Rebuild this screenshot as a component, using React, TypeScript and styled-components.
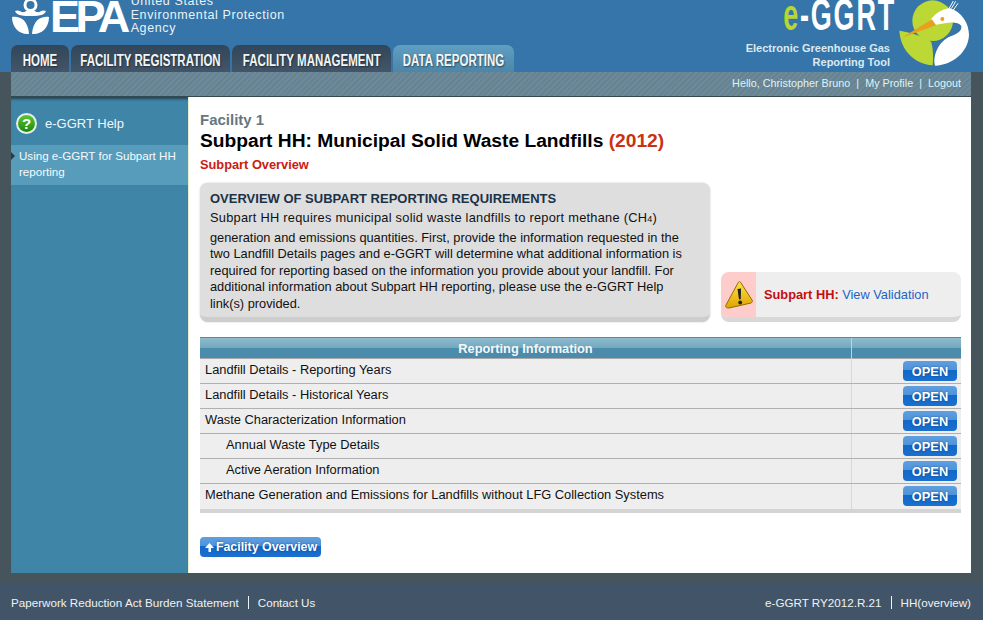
import React from "react";
import styled, { createGlobalStyle } from "styled-components";

const GlobalStyle = createGlobalStyle`
  html, body {
    margin: 0;
    padding: 0;
    background: #46555c;
  }
  * {
    box-sizing: border-box;
  }
`;

const Page = styled.div`
  width: 983px;
  height: 620px;
  overflow: hidden;
  display: flex;
  flex-direction: column;
  background: #46555c;
  font-family: "Liberation Sans", Arial, sans-serif;
  font-size: 13px;
`;

const Header = styled.header`
  height: 72px;
  flex: none;
  display: flex;
  justify-content: space-between;
  background: #3575a9;
  overflow: hidden;
`;

const HeaderLeft = styled.div`
  display: flex;
  flex-direction: column;
`;

const Brand = styled.div`
  height: 45px;
  padding-left: 12px;
  display: flex;
  align-items: flex-start;
  overflow: hidden;
`;

const EpaMark = styled.span`
  margin: -7px 0 0 1px;
  font-size: 45px;
  line-height: 48px;
  font-weight: 700;
  letter-spacing: -4.5px;
  color: #fff;
`;

const AgencyName = styled.div`
  margin: -5px 0 0 5px;
  font-size: 12.5px;
  line-height: 13.5px;
  letter-spacing: 0.6px;
  color: #eaf2f8;
`;

const Tabs = styled.nav`
  height: 27px;
  padding-left: 11px;
  display: flex;
  gap: 2px;
`;

const Tab = styled.a<{ $active?: boolean; $width: number }>`
  width: ${(p) => p.$width}px;
  padding-top: 4px;
  display: flex;
  align-items: center;
  justify-content: center;
  border-radius: 7px 7px 0 0;
  background: ${(p) =>
    p.$active
      ? "linear-gradient(#5f9fc3, #4c86a8)"
      : "linear-gradient(#31465a, #435669)"};
  color: #f2f5f7;
  font-size: 16px;
  font-weight: 700;
  text-shadow: 1px 1px 2px rgba(0, 0, 0, 0.5);
`;

const TabLabel = styled.span`
  flex: none;
  white-space: nowrap;
  transform: scaleX(0.72);
`;

const GgrtBrand = styled.div`
  display: flex;
`;

const GgrtText = styled.div`
  display: flex;
  flex-direction: column;
  align-items: flex-end;
`;

const GgrtWord = styled.div`
  height: 42px;
  margin-top: -6px;
  font-size: 45px;
  line-height: 42px;
  font-weight: 700;
  letter-spacing: 3px;
  white-space: nowrap;
  color: #fff;
  transform-origin: right center;
  transform: translateX(6px) scaleX(0.6);
  span {
    color: #b8d632;
  }
`;

const GgrtTag = styled.div`
  margin-top: 5px;
  text-align: right;
  font-size: 11px;
  line-height: 14px;
  font-weight: 700;
  color: #dce9f2;
`;

const BirdWrap = styled.div`
  width: 93px;
  flex: none;
`;

const UtilityBar = styled.div`
  height: 25px;
  margin: 0 12px 0 11px;
  flex: none;
  display: flex;
  align-items: center;
  justify-content: flex-end;
  padding: 0 10px 2px 0;
  gap: 6px;
  border-bottom: 1px solid #37474f;
  background: repeating-linear-gradient(135deg, #6c8a9b 0 2px, #66838f 2px 4px);
  color: #dff3f7;
  font-size: 10.8px;
`;

const Body = styled.div`
  height: 476px;
  margin: 0 12px 0 11px;
  flex: none;
  display: flex;
`;

const Sidebar = styled.aside`
  width: 178px;
  flex: none;
  background: #3f85a8;
  border-right: 1px solid #e9f2d0;
  box-shadow: inset 0 4px 3px -2px rgba(30, 50, 60, 0.8);
`;

const HelpTitle = styled.div`
  height: 48px;
  padding: 5px 0 0 5px;
  display: flex;
  align-items: center;
  gap: 8px;
  color: #f2f7fa;
  font-size: 13px;
`;

const HelpLink = styled.a`
  position: relative;
  display: block;
  padding: 3px 4px 5px 8px;
  background: #589cbc;
  border-bottom: 1px solid #4a7f9c;
  color: #f6fafc;
  font-size: 11.6px;
  line-height: 16px;
  &::before {
    content: "";
    position: absolute;
    left: 0;
    top: 7px;
    border-left: 4px solid #2c3a44;
    border-top: 4px solid transparent;
    border-bottom: 4px solid transparent;
  }
`;

const Main = styled.main`
  flex: 1;
  background: #fff;
  padding: 14px 10px 0 11px;
`;

const FacilityName = styled.div`
  font-size: 15px;
  line-height: 18px;
  font-weight: 700;
  color: #66767f;
`;

const Title = styled.h1`
  margin: 0;
  font-size: 19.2px;
  line-height: 24px;
  font-weight: 700;
  color: #000;
  span {
    color: #c8330f;
  }
`;

const SubTitle = styled.div`
  margin-top: 4px;
  font-size: 12.8px;
  line-height: 16px;
  font-weight: 700;
  color: #c8200f;
`;

const InfoRow = styled.div`
  margin-top: 10px;
  display: flex;
  align-items: flex-end;
  gap: 11px;
`;

const OverviewBox = styled.section`
  width: 510px;
  height: 139px;
  padding: 7px 10px 0;
  border-radius: 8px;
  border-bottom: 5px solid #cdcdcd;
  background: #dedede;
  box-shadow: 0 0 2px #c8c8c8;
  color: #111;
  font-size: 12.8px;
  line-height: 16.5px;
  sub {
    font-size: 9px;
    vertical-align: baseline;
  }
`;

const OverviewHeading = styled.h2`
  margin: 0 0 3px;
  font-size: 13px;
  line-height: 17px;
  font-weight: 700;
  color: #1c3246;
`;

const LeadLine = styled.div`
  margin-bottom: 2px;
  letter-spacing: 0.26px;
`;

const ValidationBox = styled.div`
  width: 240px;
  height: 50px;
  display: flex;
  align-items: center;
  overflow: hidden;
  border-radius: 8px;
  border-bottom: 5px solid #d8d8d8;
  background: #eee;
`;

const ValidationIcon = styled.div`
  width: 35px;
  height: 50px;
  margin-bottom: -5px;
  flex: none;
  display: flex;
  align-items: center;
  justify-content: center;
  padding-bottom: 5px;
  background: linear-gradient(#ffcccc 90%, #f4b4b4 90%);
`;

const ValidationText = styled.div`
  padding-left: 8px;
  font-size: 12.8px;
  font-weight: 700;
  color: #c40d0d;
  a {
    font-weight: 400;
    color: #1c64c4;
  }
`;

const Table = styled.div`
  margin-top: 15px;
  border-bottom: 4px solid #d4d4d4;
`;

const HeadRow = styled.div`
  height: 22px;
  display: grid;
  grid-template-columns: 651px 110px;
  border-top: 1px solid #4b8dac;
  border-bottom: 1px solid #a8a8a8;
  background: linear-gradient(#8fbbce 0, #73a7be 50%, #4b8bac 50%, #4b8bac 100%);
`;

const HeadCell = styled.div`
  text-align: center;
  font-size: 12.8px;
  line-height: 21px;
  font-weight: 700;
  color: #f4f8fa;
  & + & {
    border-left: 1px solid #b9d5e0;
  }
`;

const Row = styled.div`
  height: 25px;
  display: grid;
  grid-template-columns: 651px 110px;
  background: #eee;
  border-bottom: 1px solid #b0b0b0;
  &:last-child {
    border-bottom: none;
  }
`;

const NameCell = styled.div<{ $indent?: boolean }>`
  padding: 3px 0 0 ${(p) => (p.$indent ? 26 : 5)}px;
  line-height: 15px;
  font-size: 12.85px;
  color: #111;
`;

const ActionCell = styled.div`
  display: flex;
  justify-content: flex-end;
  padding: 2px 4px 0 0;
  border-left: 1px solid #d8d8d8;
`;

const BlueButton = styled.a`
  display: inline-flex;
  align-items: center;
  justify-content: center;
  height: 20px;
  border-radius: 4px;
  background: linear-gradient(#5f9fe0 0, #4f93da 45%, #1268c8 45%, #1a6fcf 100%);
  color: #fff;
  font-size: 12.8px;
  font-weight: 700;
  text-shadow: 0 0 2px rgba(0, 40, 100, 0.7);
`;

const OpenButton = styled(BlueButton)`
  width: 54px;
`;

const BackButton = styled(BlueButton)`
  width: 121px;
  margin-top: 24px;
  gap: 1px;
  font-size: 12.4px;
`;

const Footer = styled.footer`
  flex: 1;
  margin-top: 10px;
  padding: 2px 12px 0 11px;
  display: flex;
  align-items: center;
  justify-content: space-between;
  background: #425568;
  color: #eef2f4;
  font-size: 11.65px;
`;

const FooterGroup = styled.div`
  display: flex;
  align-items: center;
`;

const FooterItem = styled.span`
  & + & {
    margin-left: 9px;
    padding-left: 9px;
    border-left: 1px solid #eef2f4;
  }
`;

const rows = [
  { name: "Landfill Details - Reporting Years" },
  { name: "Landfill Details - Historical Years" },
  { name: "Waste Characterization Information" },
  { name: "Annual Waste Type Details", indent: true },
  { name: "Active Aeration Information", indent: true },
  { name: "Methane Generation and Emissions for Landfills without LFG Collection Systems" },
];

function EpaSeal() {
  return (
    <svg width="37" height="35" viewBox="0 0 37 35">
      <circle cx="18.5" cy="5" r="5.5" fill="none" stroke="#fff" strokeWidth="3" />
      <path d="M3 11 C7 9 9 13 12 12 C15 11 15 10 18.5 10 C22 10 22 11 25 12 C28 13 30 9 34 11 C33 14 30 16 18.5 16 C7 16 4 14 3 11Z" fill="#fff" />
      <path d="M0 17 C8 16 16 20 17 34 C8 35 0 28 0 17Z" fill="#fff" />
      <path d="M37 17 C29 16 21 20 20 34 C29 35 37 28 37 17Z" fill="#fff" />
    </svg>
  );
}

// drawn in the 3x coordinates of the logo crop
function BirdLogo() {
  return (
    <svg width="85" height="72" viewBox="0 0 255 216">
      <circle cx="128" cy="62" r="61" fill="#bcd835" />
      <path d="M28 92 C60 98 110 110 124 126 C130 150 130 175 128 196 C70 190 32 150 28 92Z" fill="#bcd835" />
      <path d="M135 197 C128 175 140 130 175 112 C200 102 216 95 214 78 C205 66 185 66 165 70 L128 76 L120 62 C135 40 155 28 178 24 C215 35 237 70 237 105 C235 155 190 195 135 197Z" fill="#fff" />
      <path d="M36 113 L126 58 L138 76Z" fill="#e8a020" />
      <circle cx="157" cy="57" r="6" fill="#e8a020" />
      <path d="M178 24 L190 3 M184 26 L197 4 M190 30 L204 10" stroke="#fff" strokeWidth="3" fill="none" />
    </svg>
  );
}

function WarningIcon() {
  return (
    <svg width="28" height="28" viewBox="0 0 28 28">
      <defs>
        <linearGradient id="warnFill" x1="0" y1="0" x2="0" y2="1">
          <stop offset="0" stopColor="#ffe24a" />
          <stop offset="1" stopColor="#e0a400" />
        </linearGradient>
      </defs>
      <path d="M13 2 C14 0 15 0 16 2 L27 19 C28 21 27 21 26 22 L4 27 C1 27 0 26 1 24Z" fill="url(#warnFill)" stroke="#8a6d00" strokeWidth="1" />
      <path d="M12.5 8 L16 7.5 L15.8 18 L14 18.5Z" fill="#222" />
      <circle cx="15.2" cy="21.5" r="1.9" fill="#222" />
    </svg>
  );
}

function HelpIcon() {
  return (
    <svg width="21" height="21" viewBox="0 0 21 21">
      <defs>
        <linearGradient id="helpFill" x1="0" y1="0" x2="0" y2="1">
          <stop offset="0" stopColor="#5cc63a" />
          <stop offset="1" stopColor="#1a8a0a" />
        </linearGradient>
      </defs>
      <circle cx="10.5" cy="10.5" r="10.5" fill="#e8eee8" />
      <circle cx="10.5" cy="10.5" r="8.5" fill="url(#helpFill)" />
      <text x="10.5" y="16" textAnchor="middle" fontFamily="Liberation Sans" fontSize="15" fontWeight="700" fill="#fff">?</text>
    </svg>
  );
}

function UpArrow() {
  return (
    <svg width="11" height="11" viewBox="0 0 11 11">
      <path d="M5.5 1 L10 6 L7 6 L7 10 L4.5 10 L4.5 6 L1 6Z" fill="#fff" />
    </svg>
  );
}

const tabs = [
  { label: "HOME", width: 58 },
  { label: "FACILITY REGISTRATION", width: 159 },
  { label: "FACILITY MANAGEMENT", width: 159 },
  { label: "DATA REPORTING", width: 121, active: true },
];

export default function App() {
  return (
    <Page>
      <GlobalStyle />
      <Header>
        <HeaderLeft>
          <Brand>
            <EpaSeal />
            <EpaMark>EPA</EpaMark>
            <AgencyName>
              United States
              <br />
              Environmental Protection
              <br />
              Agency
            </AgencyName>
          </Brand>
          <Tabs>
            {tabs.map((tab) => (
              <Tab key={tab.label} $width={tab.width} $active={tab.active}>
                <TabLabel>{tab.label}</TabLabel>
              </Tab>
            ))}
          </Tabs>
        </HeaderLeft>
        <GgrtBrand>
          <GgrtText>
            <GgrtWord>
              <span>e</span>-GGRT
            </GgrtWord>
            <GgrtTag>
              Electronic Greenhouse Gas
              <br />
              Reporting Tool
            </GgrtTag>
          </GgrtText>
          <BirdWrap>
            <BirdLogo />
          </BirdWrap>
        </GgrtBrand>
      </Header>

      <UtilityBar>
        <span>Hello, Christopher Bruno</span>
        <span>|</span>
        <span>My Profile</span>
        <span>|</span>
        <span>Logout</span>
      </UtilityBar>

      <Body>
        <Sidebar>
          <HelpTitle>
            <HelpIcon />
            e-GGRT Help
          </HelpTitle>
          <HelpLink>Using e-GGRT for Subpart HH reporting</HelpLink>
        </Sidebar>
        <Main>
          <FacilityName>Facility 1</FacilityName>
          <Title>
            Subpart HH: Municipal Solid Waste Landfills <span>(2012)</span>
          </Title>
          <SubTitle>Subpart Overview</SubTitle>
          <InfoRow>
            <OverviewBox>
              <OverviewHeading>OVERVIEW OF SUBPART REPORTING REQUIREMENTS</OverviewHeading>
              <LeadLine>
                Subpart HH requires municipal solid waste landfills to report methane (CH<sub>4</sub>)
              </LeadLine>
              generation and emissions quantities. First, provide the information requested in the
              two Landfill Details pages and e-GGRT will determine what additional information is
              required for reporting based on the information you provide about your landfill. For
              additional information about Subpart HH reporting, please use the e-GGRT Help
              link(s) provided.
            </OverviewBox>
            <ValidationBox>
              <ValidationIcon>
                <WarningIcon />
              </ValidationIcon>
              <ValidationText>
                Subpart HH: <a>View Validation</a>
              </ValidationText>
            </ValidationBox>
          </InfoRow>
          <Table>
            <HeadRow>
              <HeadCell>Reporting Information</HeadCell>
              <HeadCell />
            </HeadRow>
            {rows.map((row) => (
              <Row key={row.name}>
                <NameCell $indent={row.indent}>{row.name}</NameCell>
                <ActionCell>
                  <OpenButton>OPEN</OpenButton>
                </ActionCell>
              </Row>
            ))}
          </Table>
          <BackButton>
            <UpArrow />
            Facility Overview
          </BackButton>
        </Main>
      </Body>

      <Footer>
        <FooterGroup>
          <FooterItem>Paperwork Reduction Act Burden Statement</FooterItem>
          <FooterItem>Contact Us</FooterItem>
        </FooterGroup>
        <FooterGroup>
          <FooterItem>e-GGRT RY2012.R.21</FooterItem>
          <FooterItem>HH(overview)</FooterItem>
        </FooterGroup>
      </Footer>
    </Page>
  );
}
